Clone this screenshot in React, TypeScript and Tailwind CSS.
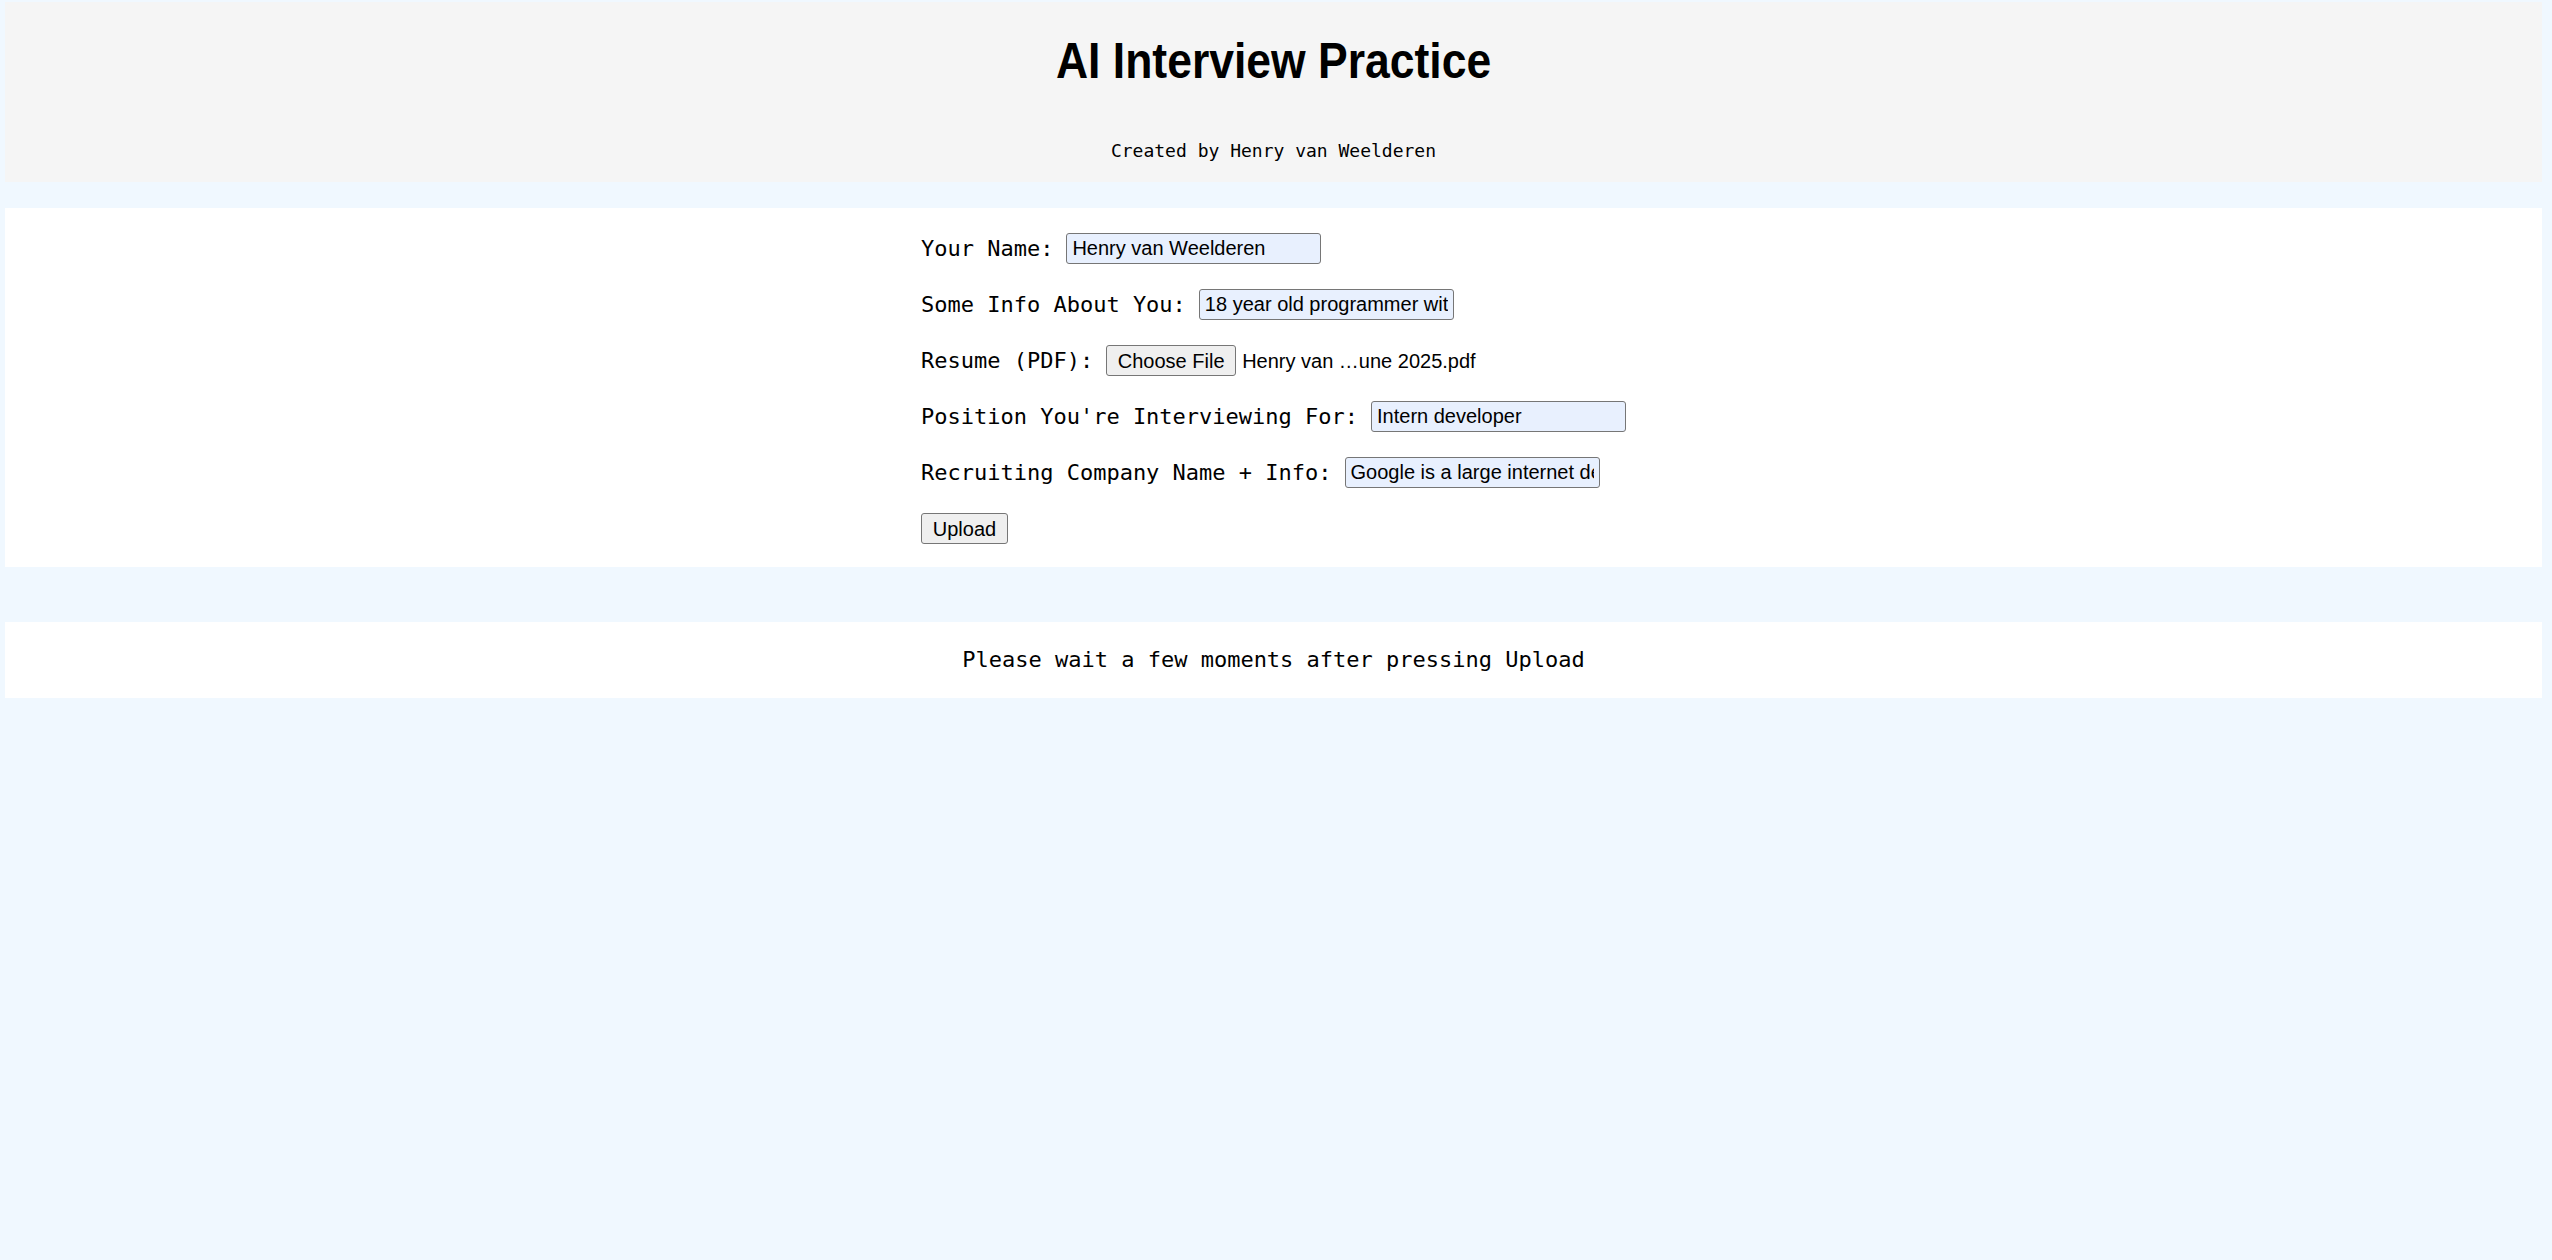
import { useState } from 'react'

const mono = "font-['DejaVu_Sans_Mono',monospace]"
const sans = "font-['Liberation_Sans',Arial,sans-serif]"

export default function App() {
  const [name, setName] = useState('Henry van Weelderen')
  const [info, setInfo] = useState('18 year old programmer with experience in Python and React')
  const [position, setPosition] = useState('Intern developer')
  const [company, setCompany] = useState('Google is a large internet development company')

  const inputCls = `h-[31px] w-[255px] rounded-[3px] border border-[#767676] bg-[#e8f0fe] px-[5px] text-[20px] text-black outline-none ${sans}`

  return (
    <div className="min-h-screen bg-[#f0f8ff] pl-[5px] pr-[10px] pt-[2px] text-black">
      <header className="flex h-[180px] flex-col items-center bg-[#f5f5f5]">
        <h1 className={`mt-[34px] scale-x-[0.89] text-[50px] leading-none font-bold ${sans}`}>AI Interview Practice</h1>
        <p className={`mt-[56px] text-[18px] leading-none ${mono}`}>Created by Henry van Weelderen</p>
      </header>

      <section className="mt-[26px] flex justify-center bg-white pt-[25px] pb-[23px]">
        <form className={`flex flex-col gap-[25px] text-[22px] leading-none ${mono}`} onSubmit={(e) => e.preventDefault()}>
          <div className="flex items-center gap-[13px]">
            <label>Your Name:</label>
            <input className={inputCls} value={name} onChange={(e) => setName(e.target.value)} />
          </div>
          <div className="flex items-center gap-[13px]">
            <label>Some Info About You:</label>
            <input className={inputCls} value={info} onChange={(e) => setInfo(e.target.value)} />
          </div>
          <div className="flex items-center gap-[13px]">
            <label>Resume (PDF):</label>
            <div className={`flex items-center gap-[6px] text-[20px] ${sans}`}>
              <button type="button" className="h-[31px] w-[130px] rounded-[3px] border border-[#767676] bg-[#efefef]">Choose File</button>
              <span>Henry van …une 2025.pdf</span>
            </div>
          </div>
          <div className="flex items-center gap-[13px]">
            <label>Position You're Interviewing For:</label>
            <input className={inputCls} value={position} onChange={(e) => setPosition(e.target.value)} />
          </div>
          <div className="flex items-center gap-[13px]">
            <label>Recruiting Company Name + Info:</label>
            <input className={inputCls} value={company} onChange={(e) => setCompany(e.target.value)} />
          </div>
          <div className="flex">
            <button type="submit" className={`h-[31px] w-[87px] rounded-[3px] border border-[#767676] bg-[#efefef] text-[20px] ${sans}`}>Upload</button>
          </div>
        </form>
      </section>

      <section className="mt-[55px] flex h-[76px] items-center justify-center bg-white">
        <p className={`text-[22px] leading-none ${mono}`}>Please wait a few moments after pressing Upload</p>
      </section>
    </div>
  )
}
